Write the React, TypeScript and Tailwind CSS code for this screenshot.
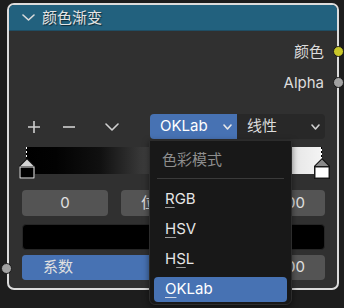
import React from "react";

const FONT = { fontFamily: 'Inter, "Noto Sans CJK SC", "Noto Sans", sans-serif' };

function Chevron({ className = "", color = "#d8d8d8", w = 14, h = 8 }: { className?: string; color?: string; w?: number; h?: number }) {
  return (
    <svg width={w} height={h} viewBox={`0 0 ${w} ${h}`} className={className}>
      <polyline points={`1,1 ${w / 2},${h - 1} ${w - 1},1`} fill="none" stroke={color} strokeWidth="1.6" strokeLinecap="round" strokeLinejoin="round" />
    </svg>
  );
}

function Marker({ fill, top }: { fill: string; top: string }) {
  return (
    <svg width="18" height="23" viewBox="0 0 18 23">
      <polygon points="9,1 17,9 17,22 1,22 1,9" fill="#111" />
      <polygon points="9,2.5 15.5,9 2.5,9" fill={top} />
      <rect x="2" y="10" width="14" height="11" fill={fill} stroke={fill === "#000" ? "#eee" : "#222"} strokeWidth="1" />
    </svg>
  );
}

export default function App() {
  return (
    <div className="relative w-[344px] h-[308px] overflow-hidden bg-[#1d1d1d] pt-[3px] pl-[7px]" style={FONT}>
      {/* node */}
      <div className="relative w-[332px] h-[287px] rounded-[7px] border-2 border-[#dcdcdc] bg-[#303030]">
        {/* header */}
        <div className="h-[26px] rounded-t-[5px] bg-[#22617e] flex items-center border-b border-[#1f4d63]">
          <Chevron className="ml-[13px]" color="#dcdcdc" w={13} h={7} />
          <span className="ml-[7px] text-[15px] leading-none text-[#e4e4e4] [text-shadow:1px_1px_1px_rgba(0,0,0,0.6)]">颜色渐变</span>
        </div>
        {/* body */}
        <div className="pl-[13px] pr-[12px] flex flex-col">
          <div className="mt-[6px] h-[30px] flex items-center justify-end pr-[1px] text-[15px] text-[#dcdcdc]">颜色</div>
          <div className="h-[32px] flex items-center justify-end pr-[1px] text-[15px] text-[#dcdcdc]">Alpha</div>

          {/* buttons row */}
          <div className="mt-[15px] h-[25px] flex items-center">
            <svg width="14" height="14" viewBox="0 0 14 14" className="ml-[5px]">
              <path d="M7 1 V13 M1 7 H13" stroke="#d0d0d0" strokeWidth="1.6" />
            </svg>
            <svg width="14" height="14" viewBox="0 0 14 14" className="ml-[21px]">
              <path d="M1 7 H13" stroke="#d0d0d0" strokeWidth="1.6" />
            </svg>
            <Chevron className="ml-[29px]" color="#d0d0d0" w={14} h={8} />
            <div className="ml-[31px] w-[87px] h-[25px] rounded-l-[4px] bg-[#4772b3] flex items-center pl-[10px] pr-[5px] text-[15px] text-white">
              <span className="flex-1">OKLab</span>
              <Chevron color="#e8e8e8" w={9} h={6} />
            </div>
            <div className="w-[88px] h-[25px] rounded-r-[4px] bg-[#282828] flex items-center pl-[10px] pr-[5px] text-[15px] text-[#dcdcdc]">
              <span className="flex-1">线性</span>
              <Chevron color="#d0d0d0" w={9} h={6} />
            </div>
          </div>

          {/* ramp */}
          <div className="relative mt-[8px] h-[27px]">
            <div className="absolute left-[4px] right-[3px] top-0 bottom-0 bg-[linear-gradient(to_right,#000_0%,#020202_10%,#101010_25%,#3e3e3e_41%,#8a8a8a_60%,#bcbcbc_75%,#e4e4e4_89%,#f4f4f4_100%)]" />
            <div className="absolute left-[4px] top-0 h-[12px] w-[1px] bg-[repeating-linear-gradient(to_bottom,#fff_0px,#fff_2px,#000_2px,#000_4px)]" />
            <div className="absolute right-[3px] top-0 h-[12px] w-[1px] bg-[repeating-linear-gradient(to_bottom,#000_0px,#000_2px,#fff_2px,#fff_4px)]" />
            <div className="absolute left-[-4px] top-[10px]">
              <Marker fill="#000" top="#d4d4d4" />
            </div>
            <div className="absolute right-[-6px] top-[10px]">
              <Marker fill="#fff" top="#8a8a8a" />
            </div>
          </div>

          {/* fields row */}
          <div className="mt-[16px] h-[26px] flex gap-[13px]">
            <div className="w-[86px] rounded-[4px] bg-[#545454] flex items-center justify-center text-[15px] text-[#e0e0e0]">0</div>
            <div className="flex-1 rounded-[4px] bg-[#545454] flex items-center pl-[20px] pr-[20px] text-[15px] text-[#e0e0e0]">
              <span className="flex-1">位置</span>
              <span>1.000</span>
            </div>
          </div>

          {/* swatch */}
          <div className="mt-[8px] h-[26px] rounded-[4px] bg-black border border-[#262626]" />

          {/* factor */}
          <div className="relative mt-[5px] h-[25px] rounded-[4px] bg-[#545454] overflow-hidden">
            <div className="absolute left-0 top-0 bottom-0 w-1/2 bg-[#4772b3]" />
            <div className="relative h-full flex items-center pl-[21px] pr-[20px] text-[15px] text-[#e0e0e0]">
              <span className="flex-1">系数</span>
              <span>0.500</span>
            </div>
          </div>
        </div>

        {/* sockets */}
        <div className="absolute right-[-7px] top-[41px] w-[11px] h-[11px] rounded-full bg-[#c8c629] border border-[#1a1a1a]" />
        <div className="absolute right-[-7px] top-[72px] w-[11px] h-[11px] rounded-full bg-[#a1a1a1] border border-[#1a1a1a]" />
        <div className="absolute left-[-8px] top-[258px] w-[11px] h-[11px] rounded-full bg-[#a1a1a1] border border-[#1a1a1a]" />
      </div>

      {/* open menu */}
      <div className="absolute left-[149px] top-[140px] w-[143px] h-[165px] rounded-b-[6px] bg-[#181818] border border-[#2c2c2c] shadow-[0_2px_6px_rgba(0,0,0,0.5)] flex flex-col px-[4px]">
        <div className="h-[37px] pt-[1px] flex items-center pl-[8px] text-[15px] text-[#8e8e8e]">色彩模式</div>
        <div className="mx-[3px] h-[1px] bg-[#3a3a3a]" />
        <div className="mt-[5px] h-[30px] flex items-center pl-[11px] text-[15px] text-[#e6e6e6]">
          <span><span className="underline underline-offset-[3px] decoration-[#9a9a9a]">R</span>GB</span>
        </div>
        <div className="h-[30px] flex items-center pl-[11px] text-[15px] text-[#e6e6e6]">
          <span><span className="underline underline-offset-[3px] decoration-[#9a9a9a]">H</span>SV</span>
        </div>
        <div className="h-[30px] flex items-center pl-[11px] text-[15px] text-[#e6e6e6]">
          <span>H<span className="underline underline-offset-[3px] decoration-[#9a9a9a]">S</span>L</span>
        </div>
        <div className="mt-[3px] h-[25px] rounded-[4px] bg-[#4772b3] flex items-center pl-[11px] text-[15px] text-white">
          <span><span className="underline underline-offset-[3px] decoration-[#cfd8e8]">O</span>KLab</span>
        </div>
      </div>
    </div>
  );
}
